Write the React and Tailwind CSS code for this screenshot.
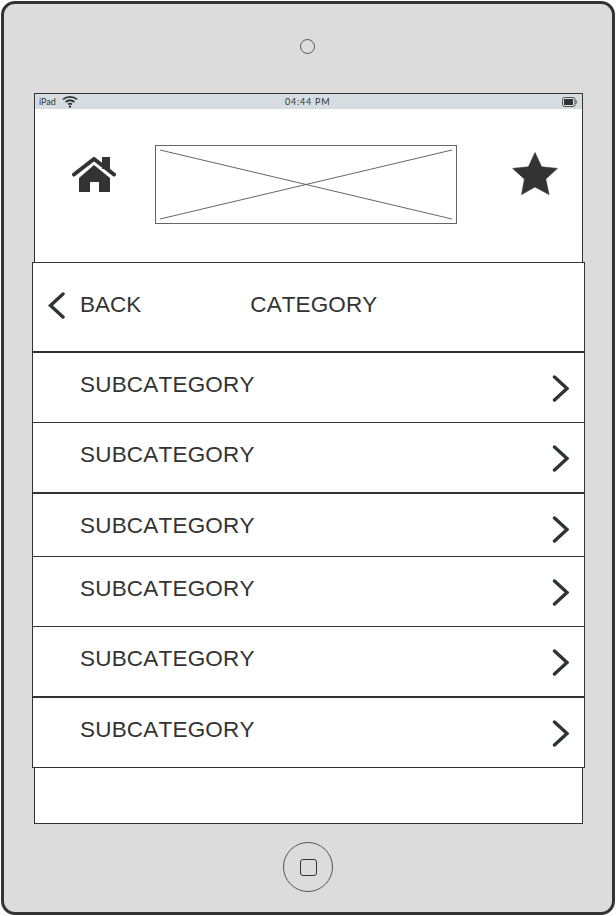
const rows = [
  { id: 1, height: "h-[71px]", border: "border-t-2" },
  { id: 2, height: "h-[70px]", border: "border-t" },
  { id: 3, height: "h-[64px]", border: "border-t-2" },
  { id: 4, height: "h-[70px]", border: "border-t" },
  { id: 5, height: "h-[70px]", border: "border-t" },
  { id: 6, height: "h-[72px]", border: "border-t-2 border-b" },
];

function WifiIcon() {
  return (
    <svg width="16" height="13" viewBox="0 0 16 13" fill="none" className="ml-[6px]">
      <path d="M1 4.4C5 .9 11 .9 15 4.4" stroke="#333" strokeWidth="1.8" />
      <path d="M3.6 7C6.2 4.9 9.8 4.9 12.4 7" stroke="#333" strokeWidth="1.8" />
      <path d="M6 9.4C7.2 8.5 8.8 8.5 10 9.4" stroke="#333" strokeWidth="1.6" />
      <circle cx="8" cy="11.6" r="1.2" fill="#333" />
    </svg>
  );
}

function BatteryIcon() {
  return (
    <svg width="15" height="10" viewBox="0 0 15 10" fill="none">
      <rect x="0.5" y="0.5" width="12.5" height="9" rx="2" fill="#d6dde0" stroke="#555" />
      <rect x="2" y="2" width="9" height="6" fill="#333" />
      <path d="M13.6 3C14.6 4 14.6 6 13.6 7" stroke="#555" />
    </svg>
  );
}

function HomeIcon() {
  return (
    <svg width="44" height="36" viewBox="0 0 44 36" className="ml-[37px] mt-[48px] shrink-0">
      <path d="M22 8L38 21V35H27V25H18V35H7V21Z" fill="#333" />
      <path d="M2.5 20L22 5L41.5 20" fill="none" stroke="#fff" strokeWidth="3" />
      <rect x="30" y="0" width="8" height="12" fill="#333" />
      <path d="M2 17.5L22 2L42 17.5" fill="none" stroke="#333" strokeWidth="4" strokeLinecap="round" />
    </svg>
  );
}

function StarIcon() {
  return (
    <svg width="46" height="44" viewBox="0 0 46 44" className="ml-[55px] mt-[43px] shrink-0">
      <path
        d="M23 0.5L29.6 14.8L45.4 16.4L33.8 27L37 42.6L23 35L9.6 42.6L12.4 27L0.6 16.4L16.4 14.8Z"
        fill="#333"
        stroke="#333"
        strokeWidth="0.6"
        strokeLinejoin="round"
      />
    </svg>
  );
}

function Chevron({ back = false }) {
  return (
    <svg width="17" height="27" viewBox="0 0 17 27" fill="none" className="shrink-0">
      <path
        d={back ? "M15 2L2.5 13.5L15 25" : "M2.5 2L15 13.5L2.5 25"}
        stroke="#2e3338"
        strokeWidth="3.4"
        strokeLinecap="round"
        strokeLinejoin="miter"
      />
    </svg>
  );
}

export default function App() {
  return (
    <div className="h-[916px] w-[616px] bg-white p-px font-['Liberation_Sans',Arial,sans-serif] text-[#333]">
      <div className="flex h-[914px] w-[614px] flex-col rounded-[14px] border-[3px] border-[#333] bg-[#dcdcdc]">
        <div className="ml-[296px] mt-[35px] h-[15px] w-[15px] rounded-full border border-[#555]" />

        <div className="ml-[30px] mt-[39px] flex h-[731px] w-[549px] flex-col border border-[#333] bg-white">
          <div className="relative flex h-[15px] shrink-0 items-center bg-[#d6dde0] pl-[4px] pr-[5px] font-['Lato',sans-serif] text-[9px] leading-none">
            <span>iPad</span>
            <WifiIcon />
            <span className="ml-[207px] tracking-[0.8px]">04:44 PM</span>
            <span className="ml-auto">
              <BatteryIcon />
            </span>
          </div>

          <div className="flex h-[153px] shrink-0 items-start">
            <HomeIcon />
            <div className="ml-[39px] mt-[36px] h-[79px] w-[302px] shrink-0 border border-[#666]">
              <svg width="300" height="77" viewBox="0 0 300 77" fill="none">
                <path d="M4 4L296 73M4 73L296 4" stroke="#666" strokeWidth="1" />
              </svg>
            </div>
            <StarIcon />
          </div>

          <div className="-mx-[3px] flex flex-col bg-white text-[22.5px] leading-[26px] text-[#333] [font-kerning:none]">
            <div className="flex h-[89px] items-start border-x border-t border-[#333]">
              <div className="ml-[15px] mt-[29px]">
                <Chevron back />
              </div>
              <span className="ml-[15px] mt-[29px]">BACK</span>
              <span className="ml-[109px] mt-[29px] tracking-[0.1px]">CATEGORY</span>
            </div>

            {rows.map((row) => (
              <div
                key={row.id}
                className={`flex items-start border-x border-[#333] ${row.height} ${row.border}`}
              >
                <span className="ml-[47px] pt-[19px] tracking-[0.2px]">SUBCATEGORY</span>
                <div className="ml-auto mr-[15px] mt-[22px]">
                  <Chevron />
                </div>
              </div>
            ))}
          </div>
        </div>

        <div className="ml-[279px] mt-[18px] flex h-[50px] w-[50px] items-center justify-center rounded-full border border-[#555]">
          <div className="h-[17px] w-[17px] rounded-[3px] border border-[#333]" />
        </div>
      </div>
    </div>
  );
}
